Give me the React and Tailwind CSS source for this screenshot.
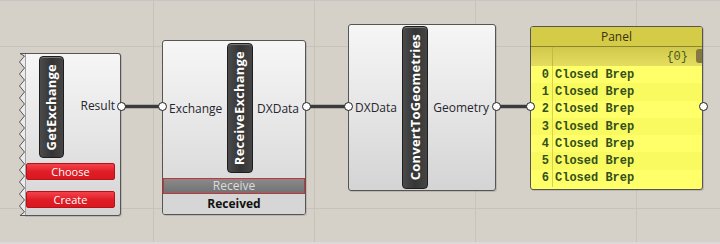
import React from "react";

const sans = "font-['Open_Sans','Noto_Sans',sans-serif]";
const mono = "font-['Liberation_Mono','Courier_New',monospace]";

function Capsule({ label, className }) {
  return (
    <div
      className={`flex items-center justify-center rounded-[4px] border border-[#1e1e1e] bg-linear-to-r from-[#4b4b4b] via-[#353535] to-[#454545] shadow-[inset_0_1px_0_#7a7a7a] ${className}`}
    >
      <span className={`${sans} rotate-180 text-[13px] font-bold leading-none tracking-[0.2px] text-white [writing-mode:vertical-rl]`}>
        {label}
      </span>
    </div>
  );
}

function Port({ x, y }) {
  return (
    <div
      className="absolute z-20 size-[9px] rounded-full border-[1.5px] border-[#202020] bg-white"
      style={{ left: x - 4.5, top: y - 4.5 }}
    />
  );
}

function Wire({ x1, x2, y }) {
  return (
    <div
      className="absolute z-10 h-[3px] bg-[#3b3b3b] shadow-[0_0_0_0.5px_#8a8a8a]"
      style={{ left: x1, width: x2 - x1, top: y - 1.5 }}
    />
  );
}

function RedButton({ children }) {
  return (
    <div className={`${sans} flex h-[17px] items-center justify-center rounded-[2px] border border-[#b5121a] bg-linear-to-b from-[#f3414a] via-[#e11d26] to-[#d91820] text-[11px] leading-none text-white`}>
      {children}
    </div>
  );
}

const nodeSkin =
  "border border-[#555] bg-linear-to-b from-[#f6f6f6] via-[#e6e6e6] to-[#d4d4d4] shadow-[1px_1px_0_rgba(0,0,0,0.12)]";

const rows = ["Closed Brep", "Closed Brep", "Closed Brep", "Closed Brep", "Closed Brep", "Closed Brep", "Closed Brep"];

export default function App() {
  return (
    <div className="relative h-[244px] w-[720px] overflow-hidden border-t border-b-2 border-t-[#c6c6c6] border-b-[#dadada] bg-[#d5d1c9]">
      {/* canvas grid */}
      {[153, 314, 475, 636].map((x) => (
        <div key={x} className="absolute top-0 h-full w-px bg-[#c7c3bb]" style={{ left: x }} />
      ))}
      {[45, 207].map((y) => (
        <div key={y} className="absolute left-0 h-px w-full bg-[#c7c3bb]" style={{ top: y }} />
      ))}

      {/* wires */}
      <Wire x1={121} x2={162} y={105.5} />
      <Wire x1={305} x2={348} y={105.5} />
      <Wire x1={495} x2={530} y={105.5} />

      {/* GetExchange */}
      <div className="absolute left-[24px] top-[52px] h-[163px] w-[97px]">
        <svg className="absolute -left-[6px] top-0" width="8" height="163" viewBox="0 0 8 163">
          <polygon
            fill="#ebebeb"
            stroke="#555"
            strokeWidth="1"
            points={
              "8,0.5 2,0.5 " +
              Array.from({ length: 27 }, (_, i) => `${i % 2 === 0 ? 6.5 : 1.5},${3 + i * 6}`).join(" ") +
              " 2,162.5 8,162.5"
            }
          />
        </svg>
        <div className={`flex h-full flex-col rounded-r-[3px] border-l-0 ${nodeSkin} pl-[2px] pr-[5px] pt-[2px]`}>
          <div className="flex h-[102px] items-center">
            <Capsule label="GetExchange" className="ml-[13px] h-[102px] w-[25px]" />
            <span className={`${sans} ml-auto mt-[-2px] text-[12px] text-[#26262e]`}>Result</span>
          </div>
          <div className="mt-[5px] flex flex-col gap-[11px]">
            <RedButton>Choose</RedButton>
            <RedButton>Create</RedButton>
          </div>
        </div>
      </div>
      <Port x={121} y={105.5} />

      {/* ReceiveExchange */}
      <div className={`absolute left-[162px] top-[39px] flex h-[175px] w-[144px] flex-col overflow-hidden rounded-[3px] ${nodeSkin}`}>
        <div className="flex h-[137px] items-start px-[6px] pt-[2px]">
          <span className={`${sans} mt-[57px] text-[12px] text-[#26262e]`}>Exchange</span>
          <Capsule label="ReceiveExchange" className="ml-auto h-[130px] w-[26px]" />
          <span className={`${sans} ml-auto mt-[57px] text-[12px] text-[#26262e]`}>DXData</span>
        </div>
        <div className={`${sans} flex h-[16px] items-center justify-center border border-[#c8343a] bg-linear-to-b from-[#8a8a8a] to-[#727272] text-[12px] leading-none text-[#dcdcdc]`}>
          Receive
        </div>
        <div className={`${sans} flex flex-1 items-center justify-center bg-[#d6d6d6] text-[12px] font-bold text-[#111]`}>
          Received
        </div>
      </div>
      <Port x={162} y={105.5} />
      <Port x={306} y={105.5} />

      {/* ConvertToGeometries */}
      <div className={`absolute left-[348px] top-[23px] flex h-[167px] w-[148px] items-center rounded-[3px] px-[6px] ${nodeSkin}`}>
        <span className={`${sans} text-[12px] text-[#26262e]`}>DXData</span>
        <Capsule label="ConvertToGeometries" className="ml-auto h-[163px] w-[26px]" />
        <span className={`${sans} ml-auto text-[12px] text-[#26262e]`}>Geometry</span>
      </div>
      <Port x={348} y={105.5} />
      <Port x={496} y={105.5} />

      {/* Panel */}
      <div className="absolute left-[530px] top-[25px] flex h-[164px] w-[173px] flex-col overflow-hidden rounded-[3px] border border-[#555] bg-[#ffff66] shadow-[1px_1px_0_rgba(0,0,0,0.12)]">
        <div className={`${sans} flex h-[20px] items-center justify-center border-b border-[#8d8530] bg-[#d4cc47] text-[12px] text-[#3a3010]`}>
          Panel
        </div>
        <div className="relative flex h-[19px] items-center bg-linear-to-b from-[#cfc84a] to-[#e4dd60]">
          <div className="h-full w-[22px] border-r border-[#c2ba44]" />
          <span className={`${mono} ml-auto mr-[14px] text-[12px] text-[#4a5a1a]`}>{"{0}"}</span>
          <div className="absolute right-0 top-[2px] h-[14px] w-[6px] rounded-l-[3px] bg-[#86793f]" />
        </div>
        {rows.map((r, i) => (
          <div
            key={i}
            className={`flex h-[17.3px] items-center ${i % 2 === 0 ? "bg-[#ffff6a]" : "bg-[#f9f960]"}`}
          >
            <div className={`${mono} flex h-full w-[22px] items-center justify-end border-r border-[#d8d24c] pr-[3px] text-[12px] font-bold text-[#34501a]`}>
              {i}
            </div>
            <span className={`${mono} pl-[2px] text-[12px] font-bold text-[#34501a]`}>{r}</span>
          </div>
        ))}
      </div>
      <Port x={530} y={105.5} />
      <Port x={703} y={105.5} />
    </div>
  );
}
